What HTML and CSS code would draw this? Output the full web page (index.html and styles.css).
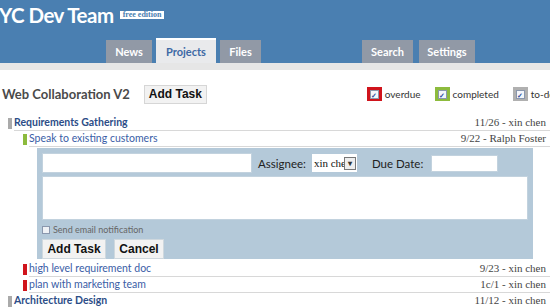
FILE: index.html
```html
<!DOCTYPE html>
<html>
<head>
	<meta charset="utf-8" />
	<title>YC Dev Team - Projects</title>
	<link rel="stylesheet" href="styles.css">
</head>
<body>
	<div class="header">
		<div class="brand"><span class="team">YC Dev Team</span><span class="badge">free edition</span></div>
		<div class="tabs">
			<a class="tab">News</a>
			<a class="tab active">Projects</a>
			<a class="tab">Files</a>
			<a class="tab push">Search</a>
			<a class="tab">Settings</a>
		</div>
	</div>
	<div class="strip"></div>

	<div class="toolbar">
		<h1>Web Collaboration V2</h1>
		<button class="btn">Add Task</button>
		<div class="legend">
			<span class="key red"><i>&#10003;</i></span><span class="lbl">overdue</span>
			<span class="key green"><i>&#10003;</i></span><span class="lbl">completed</span>
			<span class="key grey"><i>&#10003;</i></span><span class="lbl">to-do</span>
		</div>
	</div>

	<div class="list">
		<div class="row group"><span class="bar grey"></span><span class="name">Requirements Gathering</span><span class="due">11/26 - xin chen</span></div>
		<div class="row task"><span class="bar green"></span><span class="name">Speak to existing customers</span><span class="due">9/22 - Ralph Foster</span></div>

		<div class="newtask">
			<div class="line">
				<input class="title" type="text">
				<label>Assignee:</label>
				<span class="select"><span>xin che</span><b>&#9662;</b></span>
				<label class="dl">Due Date:</label>
				<input class="date" type="text">
			</div>
			<textarea></textarea>
			<div class="notify"><span class="cb"></span>Send email notification</div>
			<div class="actions">
				<button class="btn">Add Task</button>
				<button class="btn">Cancel</button>
			</div>
		</div>

		<div class="row task"><span class="bar red"></span><span class="name">high level requirement doc</span><span class="due">9/23 - xin chen</span></div>
		<div class="row task"><span class="bar red"></span><span class="name">plan with marketing team</span><span class="due">1c/1 - xin chen</span></div>
		<div class="row group"><span class="bar grey"></span><span class="name">Architecture Design</span><span class="due">11/12 - xin chen</span></div>
	</div>
</body>
</html>
```

FILE: styles.css
```css
* { margin:0; padding:0; box-sizing:border-box; }
body { width:550px; height:308px; overflow:hidden; background:#fff; font-family:Lato, "Open Sans", sans-serif; font-size:11px; color:#333; }

/* header */
.header { background:#4a7fb1; height:63px; display:flex; flex-direction:column; justify-content:space-between; }
.brand { display:flex; align-items:center; padding-top:0; height:30px; }
.team { color:#fff; font-size:20.5px; font-weight:bold; letter-spacing:-0.5px; margin-left:-1px; }
.badge { background:#fff; color:#4a7fb1; font-family:"Liberation Serif", serif; font-size:8px; font-weight:bold; line-height:8px; padding:0 3px; margin:0 0 0 6px; }
.tabs { display:flex; align-items:flex-end; padding-left:106px; }
.tab { display:block; height:23px; line-height:24px; background:#9199a6; color:#fff; font-weight:bold; font-size:11px; text-align:center; margin-right:4px; }
.tab:nth-child(1) { width:46px; }
.tab:nth-child(2) { width:60px; }
.tab:nth-child(3) { width:41px; }
.tab:nth-child(4) { width:51px; }
.tab:nth-child(5) { width:56px; }
.tab.active { height:25px; line-height:24px; background:#e9eaec; color:#3d69a5; border-top:2px solid #fff; }
.tab.push { margin-left:97px; margin-right:6px; }
.strip { height:7px; background:#e6e6e6; }

/* toolbar */
.toolbar { display:flex; align-items:center; height:36px; margin-top:6px; padding-left:2px; }
.toolbar h1 { font-size:13px; font-weight:bold; color:#4a4a4a; margin-right:14px; }
.btn { background:#f2f2f2; border:1px solid #d6d6d6; font-family:"Liberation Sans", Arial, sans-serif; font-weight:bold; font-size:12px; color:#111; height:19px; padding:0; white-space:nowrap; }
.toolbar .btn { width:63px; }
.legend { display:flex; align-items:center; margin-left:auto; margin-right:-5px; }
.key { width:15px; height:14px; display:flex; align-items:center; justify-content:center; }
.key i { width:9px; height:9px; background:#f4f6fb; border:1px solid #8a97ad; font-style:normal; font-size:7px; line-height:8px; color:#2d4fa0; text-align:center; font-weight:bold; }
.key.red { background:#d0141c; }
.key.green { background:#8dbb3d; }
.key.grey { background:#b0b0b0; }
.lbl { color:#333; font-size:10px; margin:0 14px 0 3px; }
.lbl:last-child { margin-right:0; }

/* task list */
.list { margin-top:3px; }
.row { display:flex; align-items:center; height:16px; }
.row .bar { width:4px; height:11px; margin-right:2px; }
.row .name { flex:1; height:16px; line-height:15px; font-size:10.5px; border-bottom:1px solid #d8d8d8; }
.row .due { height:16px; line-height:15px; border-bottom:1px solid #d8d8d8; font-family:"Liberation Serif", Georgia, serif; font-size:11px; color:#444; padding-right:4px; }
.row.group { padding-left:8px; }
.row.group .name { font-weight:bold; color:#2c4d87; }
.row.task { padding-left:23px; }
.row.task .name { color:#3a5da6; }
.bar.grey { background:#aaa; }
.bar.green { background:#8dbb3d; }
.bar.red { background:#d0141c; }

/* new task form */
.newtask { background:#b4c9d9; margin:1px 17px 2px 37px; height:111px; padding:5px 5px 0 5px; }
.newtask .line { display:flex; align-items:center; height:20px; }
.newtask input { border:1px solid #c2d2de; background:#fff; height:20px; }
.newtask .title { width:210px; margin-right:6px; }
.newtask label { font-size:11.5px; color:#222; margin-right:6px; }
.newtask .dl { margin-left:15px; margin-right:8px; }
.newtask .date { width:67px; height:17px; }
.select { display:flex; align-items:center; background:#fff; width:45px; height:18px; overflow:hidden; }
.select span { flex:1; min-width:0; overflow:hidden; white-space:nowrap; font-family:"Liberation Serif", serif; font-size:11px; color:#111; padding-left:2px; }
.select b { flex:none; width:12px; height:13px; border:1px solid #777; background:#eee; font-size:8px; line-height:11px; text-align:center; margin-right:1px; color:#333; }
.newtask textarea { display:block; width:486px; height:44px; border:1px solid #c2d2de; margin-top:3px; resize:none; }
.notify { display:flex; align-items:center; font-size:9px; color:#666; height:13px; margin-top:3px; }
.cb { width:8px; height:8px; border:1px solid #8a97ad; background:#eef1f5; margin:0 3px 0 0; }
.actions { display:flex; margin-top:3px; }
.actions .btn { height:20px; margin-right:8px; font-size:12px; border-color:#cfd8de; }
.actions .btn:first-child { width:64px; }
.actions .btn:last-child { width:50px; }
```
